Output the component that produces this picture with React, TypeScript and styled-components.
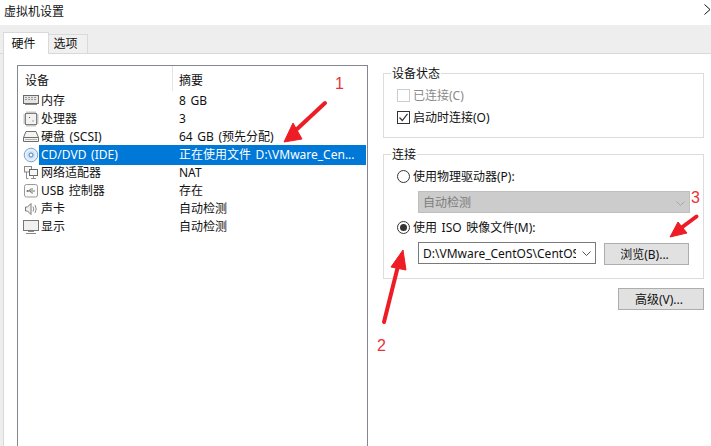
import { FC, ReactNode } from "react";
import styled, { createGlobalStyle } from "styled-components";

const GlobalStyle = createGlobalStyle`
	html, body {
		margin: 0;
		padding: 0;
		background: #ffffff;
	}
	* {
		box-sizing: border-box;
	}
`;

const Memory = () => (
	<svg width="16" height="16" viewBox="0 0 16 16" fill="none">
		<rect x="0.500" y="2.500" width="15" height="8" fill="#e4e4e4" stroke="#6a6a6a" />
		<path d="M2 4.500h12M2 6.500h12" stroke="#9a9a9a" strokeDasharray="2 1" />
		<path d="M2 11.500h12" stroke="#8a8a8a" />
	</svg>
);

const Cpu = () => (
	<svg width="16" height="16" viewBox="0 0 16 16" fill="none">
		<rect x="2.500" y="2.500" width="11" height="11" fill="#f2f2f2" stroke="#7a7a7a" />
		<path
			d="M4 0.500v2M6 0.500v2M8 0.500v2M10 0.500v2M12 0.500v2M4 13.500v2M6 13.500v2M8 13.500v2M10 13.500v2M12 13.500v2M0.500 4h2M0.500 6h2M0.500 8h2M0.500 10h2M0.500 12h2M13.500 4h2M13.500 6h2M13.500 8h2M13.500 10h2M13.500 12h2"
			stroke="#8c8c8c"
		/>
		<path d="M6 6h1v1H6zM9.500 9.500h1v1h-1z" fill="#555" />
	</svg>
);

const Disk = () => (
	<svg width="16" height="16" viewBox="0 0 16 16" fill="none">
		<path d="M3 2.500h10l2.500 6v4H0.500v-4z" fill="#f4f4f4" stroke="#6e6e6e" />
		<path d="M0.500 8.500h15" stroke="#6e6e6e" />
		<path d="M2 10.500h12" stroke="#b0b0b0" />
	</svg>
);

const Disc = () => (
	<svg width="16" height="16" viewBox="0 0 16 16" fill="none">
		<circle cx="8" cy="8" r="6.800" fill="#e3eef8" stroke="#7ba6c9" />
		<circle cx="8" cy="8" r="4" fill="#cfe2f3" />
		<circle cx="8" cy="8" r="2" fill="#ffffff" stroke="#3f86c0" />
	</svg>
);

const Network = () => (
	<svg width="16" height="16" viewBox="0 0 16 16" fill="none">
		<rect x="1.500" y="1.500" width="7" height="5.500" fill="#f6f6f6" stroke="#8a8a8a" />
		<rect x="6.500" y="4.500" width="8" height="6" fill="#f6f6f6" stroke="#6a6a6a" />
		<path d="M10.500 10.500v2.500M8 13.500h5M3.500 7v6.500h2" stroke="#8a8a8a" />
	</svg>
);

const Usb = () => (
	<svg width="16" height="16" viewBox="0 0 16 16" fill="none">
		<rect x="1.500" y="1.500" width="13" height="12.500" rx="2" fill="#fafafa" stroke="#9a9a9a" />
		<path d="M4 8h8M6 8l1.500-2H10M7 8l1.500 2H10" stroke="#777" />
		<circle cx="4.500" cy="8" r="1" fill="#777" />
	</svg>
);

const Speaker = () => (
	<svg width="16" height="16" viewBox="0 0 16 16" fill="none">
		<path d="M2.500 6h2l3.500-3.500v11L4.500 10h-2z" fill="#f2f2f2" stroke="#7a7a7a" />
		<path d="M10 5.500q1.500 2.500 0 5M12 4q2.500 4 0 8" stroke="#8a8a8a" />
	</svg>
);

const Display = () => (
	<svg width="16" height="16" viewBox="0 0 16 16" fill="none">
		<rect x="0.500" y="1.500" width="15" height="10" fill="#f0f0f0" stroke="#777" />
		<path d="M5 12.500h6M3 14.500h10" stroke="#8a8a8a" />
	</svg>
);

const Chevron: FC<{ color: string }> = ({ color }) => (
	<svg width="9" height="5" viewBox="0 0 9 5" fill="none">
		<path d="M0.500 0.500L4.500 4.500l4-4" stroke={color} />
	</svg>
);

interface Device {
	id: string;
	icon: ReactNode;
	name: string;
	summary: string;
	selected?: boolean;
}

const devices: Device[] = [
	{ id: "mem", icon: <Memory />, name: "内存", summary: "8 GB" },
	{ id: "cpu", icon: <Cpu />, name: "处理器", summary: "3" },
	{ id: "disk", icon: <Disk />, name: "硬盘 (SCSI)", summary: "64 GB (预先分配)" },
	{
		id: "cd",
		icon: <Disc />,
		name: "CD/DVD (IDE)",
		summary: "正在使用文件 D:\\VMware_Cen...",
		selected: true,
	},
	{ id: "net", icon: <Network />, name: "网络适配器", summary: "NAT" },
	{ id: "usb", icon: <Usb />, name: "USB 控制器", summary: "存在" },
	{ id: "snd", icon: <Speaker />, name: "声卡", summary: "自动检测" },
	{ id: "dsp", icon: <Display />, name: "显示", summary: "自动检测" },
];

const App: FC = () => (
	<Window>
		<GlobalStyle />
		<TitleBar>
			<span>虚拟机设置</span>
			<CloseIcon width="7" height="11" viewBox="0 0 7 11" fill="none">
				<path d="M0.500 0.500L6 5.500 0.500 10.500" stroke="#111" />
			</CloseIcon>
		</TitleBar>

		<TabStrip>
			<Tab $active>硬件</Tab>
			<Tab>选项</Tab>
		</TabStrip>

		<Content>
			<DeviceList>
				<ListHeader>
					<HeaderCell>设备</HeaderCell>
					<HeaderCell $divided>摘要</HeaderCell>
				</ListHeader>
				{devices.map((device) => (
					<DeviceRow key={device.id}>
						<IconCell>{device.icon}</IconCell>
						<NameCell $selected={device.selected}>{device.name}</NameCell>
						<SummaryCell $selected={device.selected}>{device.summary}</SummaryCell>
					</DeviceRow>
				))}
			</DeviceList>

			<SidePanel>
				<StatusGroup>
					<GroupTitle>设备状态</GroupTitle>
					<OptionRow $disabled>
						<CheckBox $disabled />
						已连接(C)
					</OptionRow>
					<OptionRow>
						<CheckBox>
							<svg width="11" height="11" viewBox="0 0 11 11" fill="none">
								<path d="M1.500 5.500L4.300 8.500 9.500 1.800" stroke="#333" strokeWidth="1.200" />
							</svg>
						</CheckBox>
						启动时连接(O)
					</OptionRow>
				</StatusGroup>

				<ConnectionGroup>
					<GroupTitle>连接</GroupTitle>
					<OptionRow>
						<Radio />
						使用物理驱动器(P):
					</OptionRow>
					<DisabledSelect>
						自动检测
						<Chevron color="#a8a8a8" />
					</DisabledSelect>
					<OptionRow>
						<Radio $checked />
						使用 ISO 映像文件(M):
					</OptionRow>
					<IsoRow>
						<PathSelect>
							<PathText>D:\VMware_CentOS\CentOS</PathText>
							<Chevron color="#555" />
						</PathSelect>
						<BrowseButton>浏览(B)...</BrowseButton>
					</IsoRow>
				</ConnectionGroup>

				<AdvancedButton>高级(V)...</AdvancedButton>
			</SidePanel>
		</Content>

		<Annotations width="711" height="446" viewBox="0 0 711 446">
			<g fill="#ee1c25" stroke="#ee1c25" strokeLinejoin="round">
				<path d="M325 103L296 130" strokeWidth="4" strokeLinecap="round" />
				<path d="M284 142L293 123 302 139z" strokeWidth="1" />
				<path d="M384 322L398 266" strokeWidth="4" strokeLinecap="round" />
				<path d="M403 250L391 267 406 270z" strokeWidth="1" />
				<path d="M696.500 216.500L681 228" strokeWidth="4" strokeLinecap="round" />
				<path d="M670 237L678 222 687 233z" strokeWidth="1" />
			</g>
		</Annotations>
		<Marker $left={335} $top={75}>1</Marker>
		<Marker $left={377} $top={337}>2</Marker>
		<Marker $left={691} $top={189}>3</Marker>
	</Window>
);

export default App;

const uiFont = `"Noto Sans", "Noto Sans CJK SC", sans-serif`;

const Window = styled.div`
	position: relative;
	width: 711px;
	height: 446px;
	overflow: hidden;
	background: #ffffff;
	color: #111111;
	font-family: ${uiFont};
	font-size: 12px;
	line-height: 16px;
	word-spacing: 1.5px;
`;

const TitleBar = styled.header`
	display: flex;
	align-items: flex-start;
	justify-content: space-between;
	height: 25px;
	padding: 4px 0 0 4px;
`;

const CloseIcon = styled.svg`
	margin-top: 0;
`;

const TabStrip = styled.nav`
	display: flex;
	align-items: flex-end;
	height: 29px;
	padding-left: 3px;
	background: #eeeeee;
	border-bottom: 1px solid #d9d9d9;
`;

const Tab = styled.div<{ $active?: boolean }>`
	display: flex;
	align-items: center;
	justify-content: center;
	width: ${(p) => (p.$active ? "46px" : "40px")};
	height: ${(p) => (p.$active ? "22px" : "19px")};
	margin-left: ${(p) => (p.$active ? "0" : "-1px")};
	margin-bottom: ${(p) => (p.$active ? "-1px" : "0")};
	padding-right: 5px;
	background: ${(p) => (p.$active ? "#ffffff" : "#f0f0f0")};
	border: 1px solid #d9d9d9;
	border-bottom: ${(p) => (p.$active ? "none" : "0")};
`;

const Content = styled.main`
	display: flex;
	gap: 15px;
	height: 392px;
	margin-left: 3px;
	padding: 11px 7px 0 13px;
	background: #ffffff;
	border-left: 1px solid #d9d9d9;
	box-shadow: -3px 0 0 #eeeeee;
`;

const DeviceList = styled.section`
	flex: none;
	width: 351px;
	height: 400px;
	border: 1px solid #828790;
	border-bottom: none;
`;

const ListHeader = styled.div`
	display: grid;
	grid-template-columns: 154px 1fr;
	height: 25px;
`;

const HeaderCell = styled.div<{ $divided?: boolean }>`
	display: flex;
	align-items: center;
	padding-top: 4px;
	padding-left: ${(p) => (p.$divided ? "6px" : "7px")};
	border-left: ${(p) => (p.$divided ? "1px solid #e5e5e5" : "none")};
`;

const DeviceRow = styled.div`
	display: grid;
	grid-template-columns: 21px 133px 1fr;
	height: 18px;
	line-height: 20px;
	margin-right: 1px;
`;

const IconCell = styled.div`
	display: flex;
	align-items: center;
	padding-left: 5px;
`;

const NameCell = styled.div<{ $selected?: boolean }>`
	padding-left: 2px;
	white-space: nowrap;
	color: ${(p) => (p.$selected ? "#ffffff" : "inherit")};
	background: ${(p) => (p.$selected ? "#0078d7" : "transparent")};
`;

const SummaryCell = styled.div<{ $selected?: boolean }>`
	padding-left: 7px;
	white-space: pre;
	color: ${(p) => (p.$selected ? "#ffffff" : "inherit")};
	background: ${(p) => (p.$selected ? "#0078d7" : "transparent")};
`;

const SidePanel = styled.aside`
	display: flex;
	flex: none;
	flex-direction: column;
	align-items: flex-end;
	width: 321px;
`;

const Group = styled.fieldset`
	width: 100%;
	margin: 0;
	padding: 3px 0 0 13px;
	border: 1px solid #dcdcdc;
`;

const StatusGroup = styled(Group)`
	height: 73px;
	margin-bottom: 8px;
`;

const ConnectionGroup = styled(Group)`
	height: 133px;
	margin-bottom: 9px;
`;

const GroupTitle = styled.legend`
	margin-left: -6px;
	padding: 0 1px;
	height: 16px;
	line-height: 18px;
`;

const OptionRow = styled.label<{ $disabled?: boolean }>`
	display: flex;
	align-items: center;
	gap: 3px;
	height: 22px;
	padding-top: 2px;
	white-space: nowrap;
	color: ${(p) => (p.$disabled ? "#8a8a8a" : "inherit")};
`;

const CheckBox = styled.span<{ $disabled?: boolean }>`
	display: flex;
	align-items: center;
	justify-content: center;
	width: 13px;
	height: 13px;
	margin-top: -2px;
	background: #ffffff;
	border: 1px solid ${(p) => (p.$disabled ? "#cccccc" : "#333333")};
`;

const Radio = styled.span<{ $checked?: boolean }>`
	display: flex;
	flex: none;
	align-items: center;
	justify-content: center;
	width: 13px;
	height: 13px;
	margin-top: -2px;
	border: 1px solid #333333;
	border-radius: 50%;

	&::after {
		content: "";
		display: ${(p) => (p.$checked ? "block" : "none")};
		width: 7px;
		height: 7px;
		border-radius: 50%;
		background: #333333;
	}
`;

const DisabledSelect = styled.div`
	display: flex;
	align-items: center;
	justify-content: space-between;
	width: 272px;
	height: 22px;
	margin: 4px 0 3px 21px;
	padding: 2px 4px 0;
	color: #7d7d7d;
	background: #cccccc;
	border: 1px solid #bfbfbf;
`;

const IsoRow = styled.div`
	display: flex;
	align-items: flex-start;
	gap: 8px;
	margin: 4px 0 0 21px;
`;

const PathSelect = styled.div`
	display: flex;
	align-items: center;
	justify-content: space-between;
	width: 178px;
	height: 22px;
	padding: 1px 4px 0;
	background: #ffffff;
	border: 1px solid #7a7a7a;
`;

const PathText = styled.span`
	width: 153px;
	overflow: hidden;
	white-space: nowrap;
`;

const Button = styled.button`
	display: flex;
	align-items: center;
	justify-content: center;
	height: 22px;
	padding: 2px 4px 0 0;
	font: inherit;
	word-spacing: inherit;
	color: inherit;
	background: #e1e1e1;
	border: 1px solid #adadad;
`;

const BrowseButton = styled(Button)`
	width: 85px;
	margin-top: 1px;
`;

const AdvancedButton = styled(Button)`
	width: 86px;
`;

const Annotations = styled.svg`
	position: absolute;
	top: 0;
	left: 0;
	pointer-events: none;
`;

const Marker = styled.span<{ $left: number; $top: number }>`
	position: absolute;
	top: ${(p) => p.$top}px;
	left: ${(p) => p.$left}px;
	font-family: "Liberation Sans", sans-serif;
	font-size: 16px;
	line-height: 18px;
	color: #e8333a;
`;
